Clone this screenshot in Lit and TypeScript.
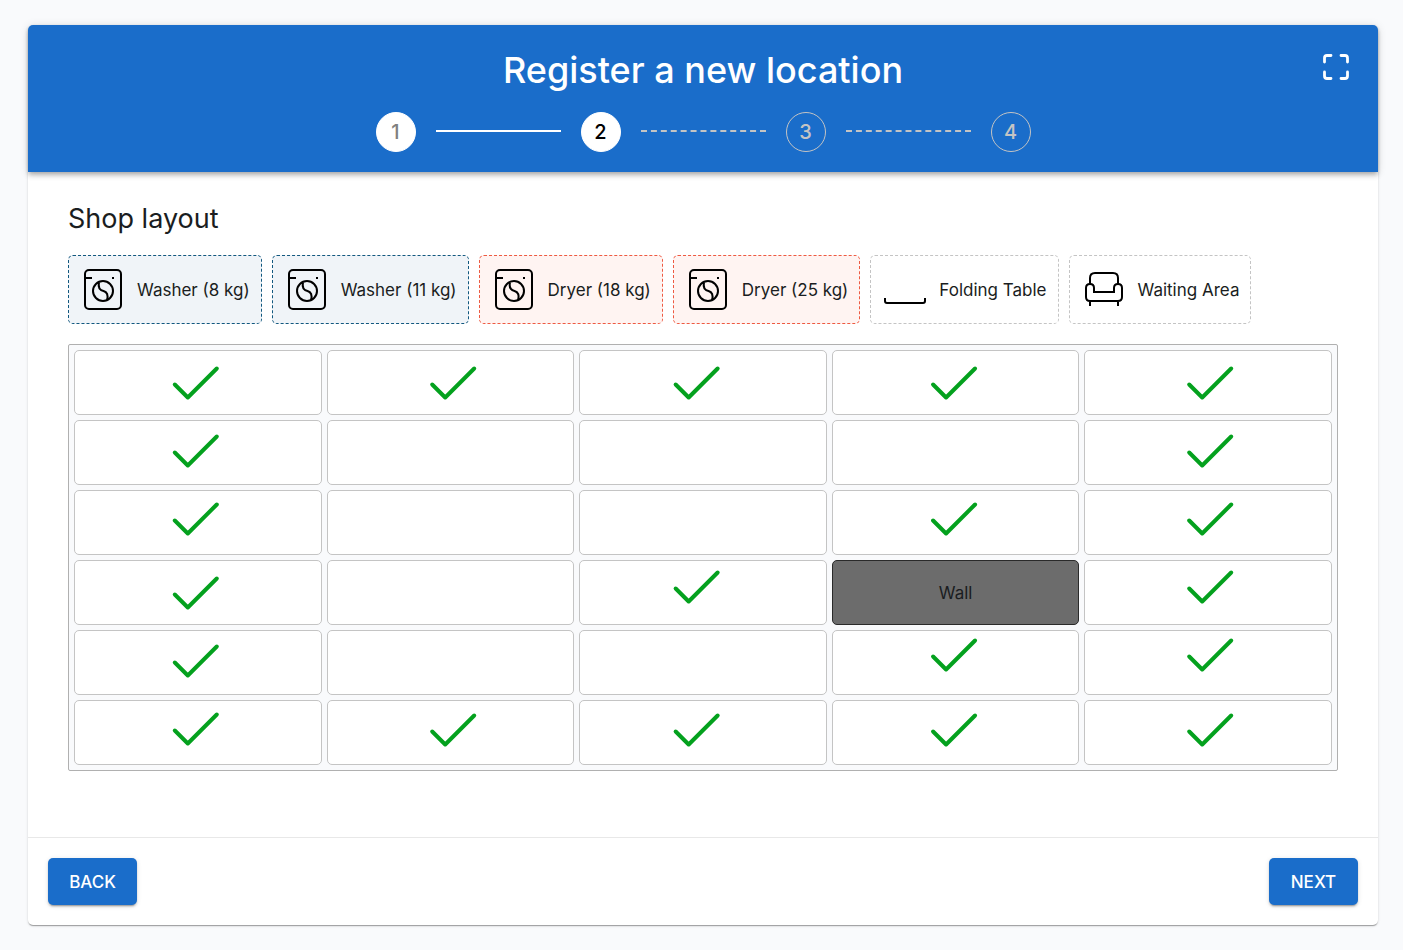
import { LitElement, html, css, svg } from "lit";
import { customElement, state } from "lit/decorators.js";

type IconName = "machine" | "table" | "sofa";

interface PaletteItem {
  label: string;
  kind: "washer" | "dryer" | "furniture";
  icon: IconName;
}

const PALETTE: PaletteItem[] = [
  { label: "Washer (8 kg)", kind: "washer", icon: "machine" },
  { label: "Washer (11 kg)", kind: "washer", icon: "machine" },
  { label: "Dryer (18 kg)", kind: "dryer", icon: "machine" },
  { label: "Dryer (25 kg)", kind: "dryer", icon: "machine" },
  { label: "Folding Table", kind: "furniture", icon: "table" },
  { label: "Waiting Area", kind: "furniture", icon: "sofa" },
];

const ICONS = {
  machine: svg`
    <rect x="6" y="4" width="36" height="39" rx="4"></rect>
    <path d="M5 12h8M33 12h2"></path>
    <circle cx="24" cy="25" r="10"></circle>
    <path d="M20 16.500C19 21 20.500 24 24.500 25C28 26 29.500 29 28 34"></path>`,
  table: svg`<path d="M4 32v3q0 2 2 2h36q2 0 2-2v-3"></path>`,
  sofa: svg`
    <path d="M10 18V12q0-5 5-5h18q5 0 5 5v6"></path>
    <path d="M10 18q4 0 4 4v4h20v-4q0-4 4-4t4 4v9q0 4-4 4H10q-4 0-4-4v-9q0-4 4-4zM10 35v5M38 35v5"></path>`,
};

const ROWS = 6;
const COLUMNS = 5;
const WALL = 3 * COLUMNS + 3;

// Free-placed approval marks: horizontal share of the floor plan, then
// the vertical positions of the marks in that column.
const MARKS: { x: string; ys: number[] }[] = [
  { x: "10%", ys: [38, 106, 174, 248, 316, 384] },
  { x: "30.3%", ys: [38, 385] },
  { x: "49.5%", ys: [38, 242, 385] },
  { x: "69.8%", ys: [38, 174, 310, 385] },
  { x: "90%", ys: [38, 106, 174, 242, 310, 385] },
];

@customElement("app-root")
export class AppRoot extends LitElement {
  @state() private step = 2;

  static styles = css`
    :host {
      display: block;
      box-sizing: border-box;
      min-height: 100vh;
      padding: 25px 25px 25px 28px;
      background: #f9fafc;
      color: #1a1d21;
      font-family: Inter, "Liberation Sans", sans-serif;
      font-size: 17px;
      line-height: 24px;
    }
    * {
      box-sizing: border-box;
    }
    .card {
      display: flex;
      flex-direction: column;
      min-height: calc(100vh - 50px);
      border-radius: 5px;
      background: #fff;
      box-shadow: 0 2px 1px -1px rgba(0, 0, 0, 0.2), 0 1px 1px rgba(0, 0, 0, 0.14),
        0 1px 3px rgba(0, 0, 0, 0.12);
    }
    .header {
      position: relative;
      padding: 20px;
      border-radius: 5px 5px 0 0;
      background: #1a6dca;
      color: #fff;
      box-shadow: 0 2px 4px -1px rgba(0, 0, 0, 0.2), 0 4px 5px rgba(0, 0, 0, 0.14),
        0 1px 10px rgba(0, 0, 0, 0.12);
    }
    .title {
      margin: 0 0 17px;
      font-size: 36px;
      line-height: 50px;
      font-weight: 500;
      text-align: center;
    }
    .expand {
      position: absolute;
      top: 22px;
      right: 22px;
      width: 40px;
      height: 40px;
      padding: 0;
      border: 0;
      background: none;
      color: inherit;
    }
    .expand svg {
      display: block;
    }
    .steps {
      display: flex;
      justify-content: center;
      align-items: center;
      gap: 20px;
      margin: 0;
      padding: 0;
      list-style: none;
    }
    .step {
      display: flex;
      align-items: center;
      gap: 20px;
    }
    .dot {
      display: grid;
      place-items: center;
      width: 40px;
      height: 40px;
      border: 1px solid #c4c4c4;
      border-radius: 50%;
      color: #c4c4c4;
      font-size: 20px;
      font-weight: 500;
    }
    .done .dot,
    .current .dot {
      border-color: #fff;
      background: #fff;
      color: #808080;
    }
    .current .dot {
      color: #000;
    }
    .line {
      width: 125px;
      height: 4px;
      border-top: 2px dashed #c4c4c4;
    }
    .done .line {
      border-top: 2px solid #fff;
    }
    .body {
      flex: 1;
      padding: 27px 40px 40px;
    }
    .subtitle {
      margin: 0 0 16px;
      font-size: 27px;
      line-height: 40px;
      font-weight: 400;
    }
    .palette {
      display: flex;
      flex-wrap: wrap;
      gap: 10px;
      margin: 0 0 20px;
      padding: 0;
      list-style: none;
    }
    .item {
      display: flex;
      align-items: center;
      gap: 10px;
      padding: 10px 11px 10px 10px;
      border: 1px dashed #c4c4c4;
      border-radius: 5px;
      cursor: grab;
    }
    .washer {
      border-color: #12587f;
      background: #f0f4f8;
    }
    .dryer {
      border-color: #ee5a42;
      background: #fff4f2;
    }
    .icon {
      display: block;
      width: 48px;
      height: 47px;
      fill: none;
      stroke: #000;
      stroke-width: 2;
    }
    .plan {
      position: relative;
      display: grid;
      grid-template-columns: repeat(5, 1fr);
      grid-auto-rows: 65px;
      gap: 5px;
      padding: 5px;
      border: 1px solid #b0b0b0;
      border-radius: 2px;
      background: #f9fafc;
    }
    .cell {
      display: grid;
      place-items: center;
      border: 1px solid #c4c4c4;
      border-radius: 5px;
      background: #fff;
    }
    .wall {
      border-color: #2a2a2a;
      background: #6c6c6c;
    }
    .marks {
      position: absolute;
      inset: 0;
      width: 100%;
      height: 100%;
      pointer-events: none;
      fill: none;
      stroke: #04a11e;
      stroke-width: 4;
      stroke-linecap: round;
      stroke-linejoin: round;
    }
    .footer {
      display: flex;
      justify-content: space-between;
      padding: 20px;
      border-top: 1px solid #e8e8e8;
    }
    .button {
      min-width: 89px;
      height: 47px;
      padding: 0 19px;
      border: 0;
      border-radius: 5px;
      background: #1a6dca;
      color: #fff;
      font: 500 17px/24px Inter, "Liberation Sans", sans-serif;
      box-shadow: 0 3px 1px -2px rgba(0, 0, 0, 0.2), 0 2px 2px rgba(0, 0, 0, 0.14),
        0 1px 5px rgba(0, 0, 0, 0.12);
      cursor: pointer;
    }
  `;

  private renderStep(n: number) {
    const status = n < this.step ? "done" : n === this.step ? "current" : "";
    return html`<li class="step ${status}">
      <span class="dot">${n}</span>
      ${n < 4 ? html`<span class="line"></span>` : ""}
    </li>`;
  }

  private renderCell(index: number) {
    return index === WALL
      ? html`<div class="cell wall">Wall</div>`
      : html`<div class="cell"></div>`;
  }

  render() {
    return html`
      <main class="card">
        <header class="header">
          <h1 class="title">Register a new location</h1>
          <button class="expand" type="button" aria-label="Full screen">
            <svg width="40" height="40" viewBox="0 0 40 40" fill="none" stroke="#fff" stroke-width="2.8" stroke-linecap="round">
              <path d="M8.500 15V11q0-2.500 2.500-2.500H15M25 8.500h4q2.500 0 2.500 2.500v4M31.500 25v4q0 2.500-2.500 2.500h-4M15 31.500h-4q-2.500 0-2.500-2.500V25"></path>
            </svg>
          </button>
          <ol class="steps">
            ${[1, 2, 3, 4].map((n) => this.renderStep(n))}
          </ol>
        </header>
        <section class="body">
          <h2 class="subtitle">Shop layout</h2>
          <ul class="palette">
            ${PALETTE.map(
              (item) => html`<li class="item ${item.kind}" draggable="true">
                <svg class="icon" viewBox="0 0 48 47" aria-hidden="true">${ICONS[item.icon]}</svg>
                <span>${item.label}</span>
              </li>`
            )}
          </ul>
          <div class="plan">
            ${Array.from({ length: ROWS * COLUMNS }, (_, i) => this.renderCell(i))}
            <svg class="marks" aria-hidden="true">
              ${MARKS.map(({ x, ys }) =>
                ys.map(
                  (y) => svg`<svg x=${x} y=${y} overflow="visible">
                    <path d="M-21 1.500L-8 14.500L21-14.500"></path>
                  </svg>`
                )
              )}
            </svg>
          </div>
        </section>
        <footer class="footer">
          <button class="button" type="button" @click=${() => (this.step = Math.max(1, this.step - 1))}>BACK</button>
          <button class="button" type="button" @click=${() => (this.step = Math.min(4, this.step + 1))}>NEXT</button>
        </footer>
      </main>
    `;
  }
}
